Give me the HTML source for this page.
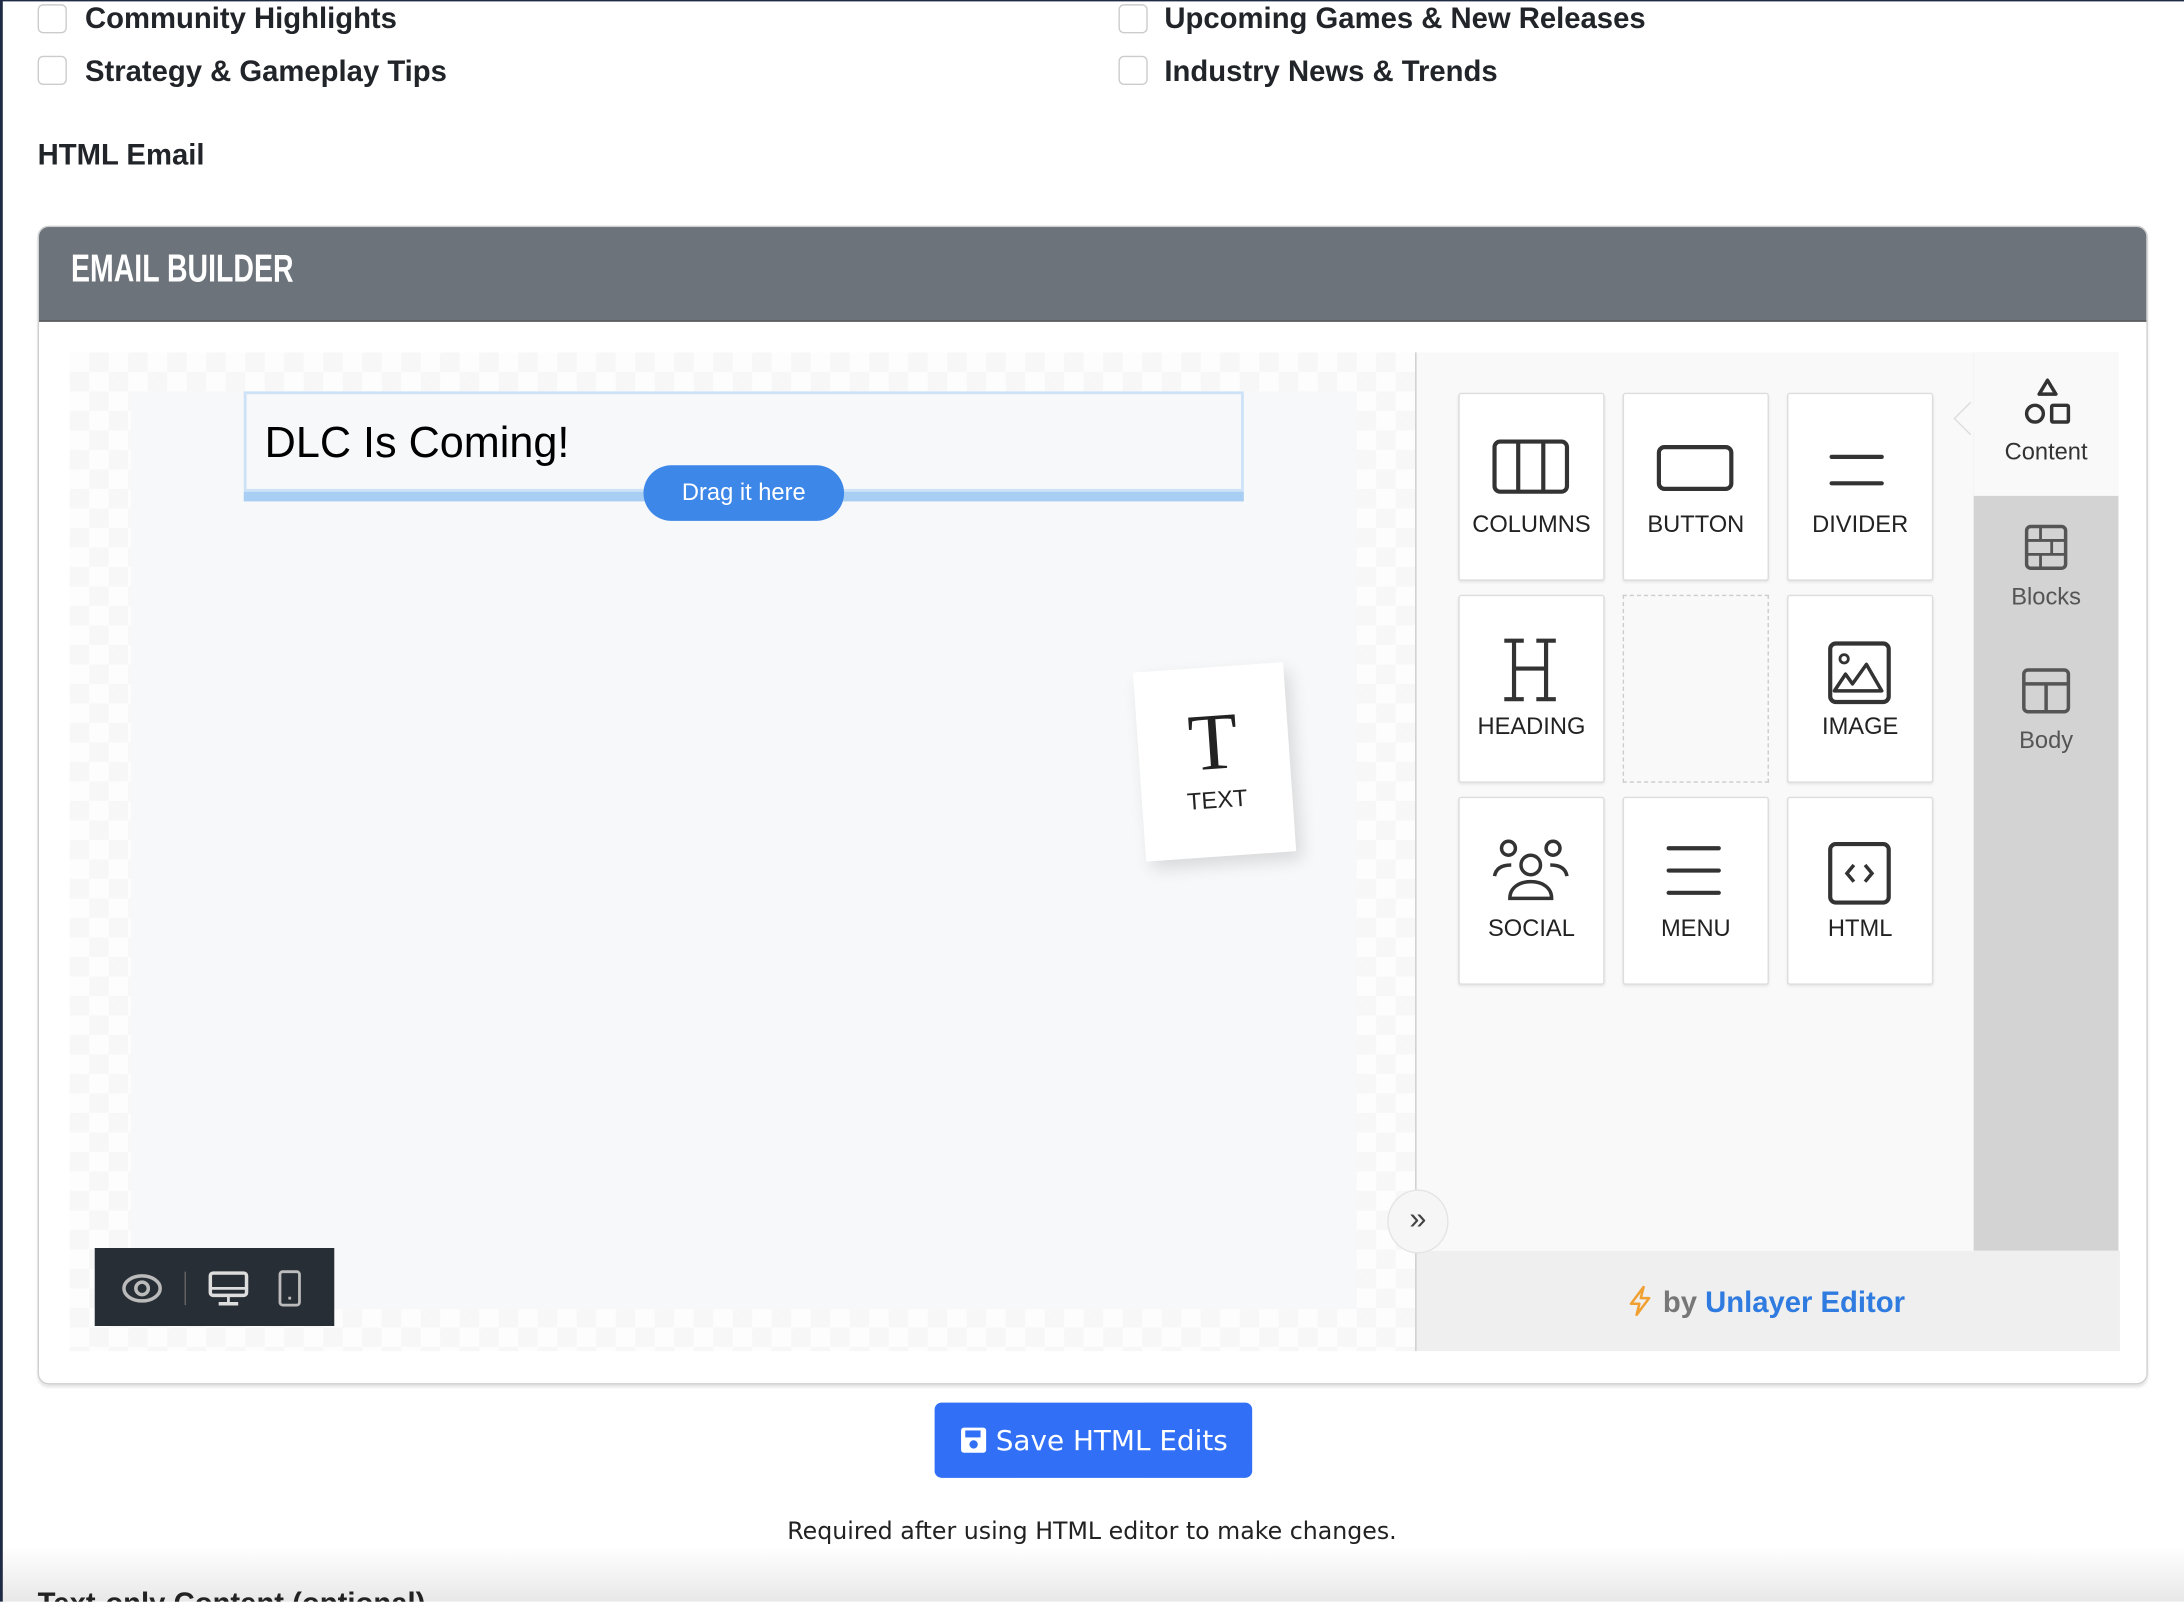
<!DOCTYPE html>
<html><head><meta charset="utf-8"><style>
html,body{margin:0;padding:0;width:2184px;height:1601px;overflow:hidden;background:#fff}
#w{position:absolute;left:0;top:0;width:1568px;height:1150px;transform:scale(1.392857);transform-origin:0 0;font-family:"Liberation Sans",sans-serif;color:#212529;overflow:hidden;background:#fff}
.a{position:absolute}
.cb{position:absolute;width:21px;height:21px;border:1px solid #ccc;border-radius:4px;background:#fff;box-sizing:border-box}
.lb{position:absolute;font-weight:bold;font-size:21px;color:#212529}
.tile{position:absolute;width:105px;height:135px;background:#fff;border:1px solid #ddd;box-sizing:border-box;border-radius:2px;box-shadow:0 1px 2px rgba(0,0,0,.08)}
.tile svg{position:absolute;left:22px;top:28px}
.tile span{position:absolute;left:0;right:0;top:84px;text-align:center;font-size:17px;color:#222}
.tab{position:absolute;left:1417px;width:104px;text-align:center;font-size:17px;color:#555}
</style></head><body><div id="w">
<div class="a" style="left:0;top:0;width:1568px;height:1px;background:#1f2a44"></div>
<div class="cb" style="left:27px;top:3px"></div><div class="lb" style="left:61px;top:2px">Community Highlights</div>
<div class="cb" style="left:27px;top:40px"></div><div class="lb" style="left:61px;top:40px">Strategy &amp; Gameplay Tips</div>
<div class="cb" style="left:803px;top:3px"></div><div class="lb" style="left:836px;top:2px">Upcoming Games &amp; New Releases</div>
<div class="cb" style="left:803px;top:40px"></div><div class="lb" style="left:836px;top:40px">Industry News &amp; Trends</div>
<div class="lb" style="left:27px;top:100px">HTML Email</div>

<div class="a" style="left:27px;top:162px;width:1515px;height:832px;border:1px solid #cfcfcf;border-radius:8px;box-sizing:border-box;overflow:hidden;box-shadow:0 2px 2px rgba(0,0,0,.1)">
 <div class="a" style="left:0;top:0;right:0;height:67px;background:#6c737b;border-bottom:1px solid #555"></div>
 <div class="a" style="left:23px;top:14px;font-weight:bold;font-size:28px;color:#fff;transform:scaleX(0.73);transform-origin:0 0">EMAIL BUILDER</div>
</div>
<!-- canvas -->
<div class="a" style="left:50px;top:253px;width:966px;height:717px;background-color:#fdfdfd;background-image:linear-gradient(45deg,#f7f7f7 25%,transparent 25%,transparent 75%,#f7f7f7 75%),linear-gradient(45deg,#f7f7f7 25%,transparent 25%,transparent 75%,#f7f7f7 75%);background-size:28px 28px;background-position:0 0,14px 14px"></div>
<div class="a" style="left:94px;top:281px;width:880px;height:659px;background:#f7f8f9"></div>
<div class="a" style="left:175px;top:281px;width:718px;height:72px;border:2px solid #cde2f7;box-sizing:border-box"></div>
<div class="a" style="left:175px;top:353px;width:718px;height:7px;background:#a8cef3"></div>
<div class="a" style="left:190px;top:300px;font-size:31px;color:#000">DLC Is Coming!</div>
<div class="a" style="left:462px;top:334px;width:144px;height:40px;border-radius:20px;background:#3d87e8;color:#fff;font-size:17px;line-height:40px;text-align:center">Drag it here</div>
<div class="a" style="left:818px;top:479px;width:108px;height:136px;background:#fff;transform:rotate(-4deg);box-shadow:4px 6px 12px rgba(0,0,0,.12)">
 <div class="a" style="left:0;right:0;top:20px;text-align:center;font-family:'Liberation Serif',serif;font-size:58px;color:#222">T</div>
 <div class="a" style="left:0;right:0;top:86px;text-align:center;font-size:17px;color:#222">TEXT</div>
</div>
<div class="a" style="left:68px;top:896px;width:172px;height:56px;background:#282e35"></div>
<svg class="a" style="left:86px;top:910px" width="140" height="30" viewBox="0 0 140 30">
 <ellipse cx="16" cy="15" rx="13" ry="9" fill="none" stroke="#bbb" stroke-width="2.5"/><circle cx="16" cy="15" r="4.5" fill="none" stroke="#bbb" stroke-width="2.5"/>
 <line x1="47" y1="3" x2="47" y2="27" stroke="#666" stroke-width="1"/>
 <rect x="65" y="4" width="26" height="16" rx="2" fill="none" stroke="#ddd" stroke-width="2.5"/><line x1="65" y1="15" x2="91" y2="15" stroke="#ddd" stroke-width="2"/><line x1="78" y1="20" x2="78" y2="26" stroke="#ddd" stroke-width="2"/><line x1="71" y1="26" x2="85" y2="26" stroke="#ddd" stroke-width="2.5"/>
 <rect x="115" y="3" width="14" height="24" rx="2" fill="none" stroke="#bbb" stroke-width="2"/><rect x="121" y="21" width="2" height="2" fill="#bbb"/>
</svg>
<!-- right panel -->
<div class="a" style="left:1016px;top:253px;width:401px;height:645px;background:#f9f9f9;border-left:1px solid #ccc"></div>
<div class="a" style="left:1417px;top:253px;width:104px;height:645px;background:#d3d3d3"></div>
<div class="a" style="left:1417px;top:253px;width:104px;height:103px;background:#f9f9f9"></div>
<div class="a" style="left:1406px;top:292px;width:16px;height:16px;background:#f9f9f9;transform:rotate(45deg);border-left:1px solid #ddd;border-bottom:1px solid #ddd"></div>
<div class="a" style="left:1016px;top:898px;width:505px;height:72px;background:#efefef;border-left:1px solid #ccc"></div>
<div class="a" style="left:996px;top:854px;width:42px;height:44px;border-radius:50%;background:#f6f6f6;border:1px solid #e4e4e4;font-size:22px;line-height:40px;text-align:center;color:#444">»</div>
<div class="a" style="left:1168px;top:923px;font-size:21px;font-weight:bold;color:#777"><svg width="20" height="22" style="vertical-align:-3px"><path d="M12 1L3 13h6l-2 8 9-12h-6z" fill="none" stroke="#f0a030" stroke-width="1.8" stroke-linejoin="round"/></svg> by <span style="color:#2f7be0">Unlayer Editor</span></div>

<div class="tile" style="left:1047px;top:282px"><svg width="60" height="50"><rect x="3" y="6" width="52" height="36" rx="4" fill="none" stroke="#333" stroke-width="3"/><line x1="20" y1="6" x2="20" y2="42" stroke="#333" stroke-width="3"/><line x1="38" y1="6" x2="38" y2="42" stroke="#333" stroke-width="3"/></svg><span>COLUMNS</span></div>
<div class="tile" style="left:1165px;top:282px"><svg width="60" height="50"><rect x="3" y="10" width="52" height="30" rx="4" fill="none" stroke="#333" stroke-width="3"/></svg><span>BUTTON</span></div>
<div class="tile" style="left:1283px;top:282px"><svg width="60" height="50"><line x1="9" y1="17" x2="45" y2="17" stroke="#333" stroke-width="3" stroke-linecap="round"/><line x1="9" y1="36" x2="45" y2="36" stroke="#333" stroke-width="3" stroke-linecap="round"/></svg><span>DIVIDER</span></div>
<div class="tile" style="left:1047px;top:427px"><svg width="60" height="50"><path d="M10 4h14M10 46h14M33 4h14M33 46h14M17 4v42M40 4v42M17 24h23" fill="none" stroke="#333" stroke-width="3"/></svg><span>HEADING</span></div>
<div class="a" style="left:1165px;top:427px;width:105px;height:135px;border:1px dashed #ccc;box-sizing:border-box"></div>
<div class="tile" style="left:1283px;top:427px"><svg width="60" height="50"><rect x="8" y="6" width="42" height="42" rx="4" fill="none" stroke="#333" stroke-width="3"/><circle cx="18" cy="17" r="3" fill="none" stroke="#333" stroke-width="2"/><path d="M11 40l8-12 5 7 10-14 11 19z" fill="none" stroke="#333" stroke-width="2.5" stroke-linejoin="round"/></svg><span>IMAGE</span></div>
<div class="tile" style="left:1047px;top:572px"><svg width="60" height="50"><circle cx="13" cy="8" r="5" fill="none" stroke="#333" stroke-width="2.5"/><circle cx="45" cy="8" r="5" fill="none" stroke="#333" stroke-width="2.5"/><circle cx="29" cy="20" r="7" fill="none" stroke="#333" stroke-width="2.5"/><path d="M3 28c1-6 6-8 12-8M55 28c-1-6-6-8-12-8M14 44c0-8 7-12 15-12s15 4 15 12z" fill="none" stroke="#333" stroke-width="2.5"/></svg><span>SOCIAL</span></div>
<div class="tile" style="left:1165px;top:572px"><svg width="60" height="50"><path d="M10 8h36M10 24h36M10 40h36" stroke="#333" stroke-width="3" stroke-linecap="round"/></svg><span>MENU</span></div>
<div class="tile" style="left:1283px;top:572px"><svg width="60" height="50"><rect x="8" y="5" width="42" height="42" rx="4" fill="none" stroke="#333" stroke-width="3"/><path d="M25 20l-5 6 5 6M33 20l5 6-5 6" fill="none" stroke="#333" stroke-width="2.5"/></svg><span>HTML</span></div>

<svg class="a" style="left:1450px;top:270px" width="40" height="36"><path d="M20 3l6 10h-12z" fill="none" stroke="#333" stroke-width="2.5" stroke-linejoin="round"/><circle cx="11" cy="27" r="6" fill="none" stroke="#333" stroke-width="2.5"/><rect x="23" y="21" width="12" height="12" rx="1" fill="none" stroke="#333" stroke-width="2.5"/></svg>
<div class="tab" style="top:315px;color:#333">Content</div>
<svg class="a" style="left:1453px;top:375px" width="34" height="36"><rect x="2" y="3" width="28" height="30" rx="3" fill="none" stroke="#555" stroke-width="2.5"/><path d="M2 13h28M2 23h28M12 3v10M20 13v10M12 23v10" stroke="#555" stroke-width="2"/></svg>
<div class="tab" style="top:419px">Blocks</div>
<svg class="a" style="left:1451px;top:478px" width="36" height="36"><rect x="2" y="3" width="32" height="30" rx="3" fill="none" stroke="#555" stroke-width="2.5"/><path d="M2 13h32M18 13v20" stroke="#555" stroke-width="2.5"/></svg>
<div class="tab" style="top:522px">Body</div>

<div class="a" style="left:671px;top:1007px;width:228px;height:54px;background:#316ff6;border-radius:5px;color:#fff;font-family:'DejaVu Sans',sans-serif;font-size:20px;line-height:54px;text-align:center">
 <svg style="vertical-align:-3px" width="20" height="20"><rect x="1" y="1" width="18" height="18" rx="2" fill="#fff"/><rect x="4" y="3" width="11" height="5" fill="#316ff6"/><circle cx="10" cy="13" r="3" fill="#316ff6"/></svg> Save HTML Edits</div>
<div class="a" style="left:0;top:1090px;width:1568px;text-align:center;font-family:'DejaVu Sans',sans-serif;font-size:17px;color:#222">Required after using HTML editor to make changes.</div>
<div class="a" style="left:0;top:1110px;width:1568px;height:40px;background:linear-gradient(#fff,#e8e8e8)"></div>
<div class="a" style="left:27px;top:1140px;font-weight:bold;font-size:21px;color:#222">Text-only Content (optional)</div>
<div class="a" style="left:0;top:0;width:2px;height:1150px;background:#1f2a44"></div>
</div></body></html>
